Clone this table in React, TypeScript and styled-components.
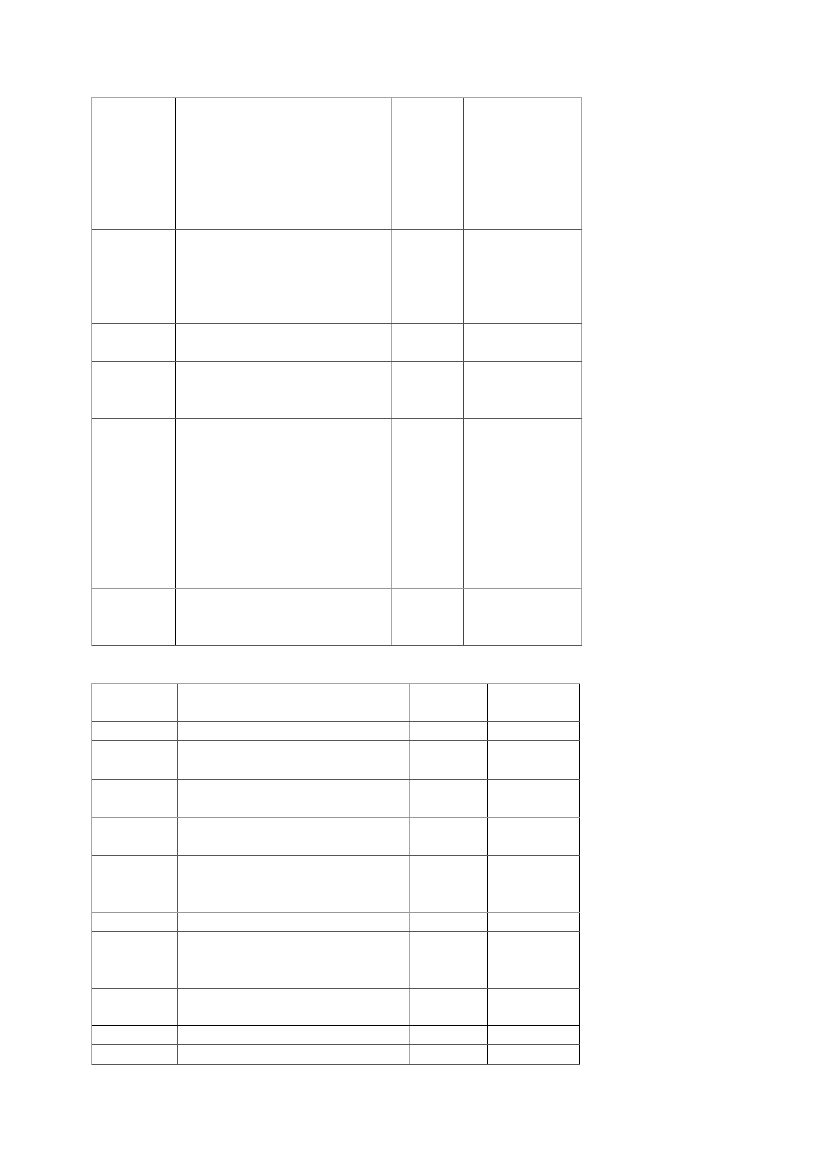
import styled, { createGlobalStyle } from 'styled-components';

const GlobalStyle = createGlobalStyle`
  html, body {
    margin: 0;
    padding: 0;
    background: #ffffff;
    font-family: "Liberation Sans", Arial, sans-serif;
  }
`;

const LIGHT = '#a6a6a6';
const DARK = '#555555';
const BLACK = '#000000';

const Page = styled.div`
  display: flex;
  flex-direction: column;
  gap: 37px;
  padding: 97px 0 0 91px;
  width: 827px;
  min-height: 1169px;
  box-sizing: border-box;
`;

const Table = styled.div<{ $top: string; $left: string }>`
  display: flex;
  flex-direction: column;
  width: max-content;
  border-top: 1px solid ${(p) => p.$top};
  border-left: 1px solid ${(p) => p.$left};
`;

const Row = styled.div<{ $cols: string; $h: number; $line: string }>`
  display: grid;
  grid-template-columns: ${(p) => p.$cols};
  height: ${(p) => p.$h}px;
  box-sizing: border-box;
  border-bottom: 1px solid ${(p) => p.$line};
`;

const Cell = styled.div<{ $line: string }>`
  box-sizing: border-box;
  border-right: 1px solid ${(p) => p.$line};
  font-size: 12px;
  color: #000;
`;

type Spec = {
  cols: number[];
  colLines: string[];
  rows: { h: number; line: string }[];
  top: string;
  left: string;
};

const first: Spec = {
  cols: [84, 216, 72, 118],
  colLines: [BLACK, LIGHT, '#444444', LIGHT],
  top: LIGHT,
  left: LIGHT,
  rows: [
    { h: 132, line: DARK },
    { h: 94, line: DARK },
    { h: 38, line: DARK },
    { h: 57, line: DARK },
    { h: 170, line: '#999999' },
    { h: 57, line: DARK },
  ],
};

const second: Spec = {
  cols: [86, 232, 78, 92],
  colLines: [DARK, LIGHT, BLACK, BLACK],
  top: LIGHT,
  left: LIGHT,
  rows: [
    { h: 38, line: DARK },
    { h: 19, line: DARK },
    { h: 39, line: DARK },
    { h: 38, line: '#999999' },
    { h: 38, line: DARK },
    { h: 57, line: '#999999' },
    { h: 19, line: DARK },
    { h: 57, line: DARK },
    { h: 37, line: BLACK },
    { h: 19, line: DARK },
    { h: 20, line: DARK },
  ],
};

function GridTable({ spec }: { spec: Spec }) {
  const template = spec.cols.map((c) => `${c}px`).join(' ');
  return (
    <Table $top={spec.top} $left={spec.left}>
      {spec.rows.map((r, i) => (
        <Row key={i} $cols={template} $h={r.h} $line={r.line}>
          {spec.cols.map((_, j) => (
            <Cell key={j} $line={spec.colLines[j]} />
          ))}
        </Row>
      ))}
    </Table>
  );
}

export default function App() {
  return (
    <>
      <GlobalStyle />
      <Page>
        <GridTable spec={first} />
        <GridTable spec={second} />
      </Page>
    </>
  );
}
